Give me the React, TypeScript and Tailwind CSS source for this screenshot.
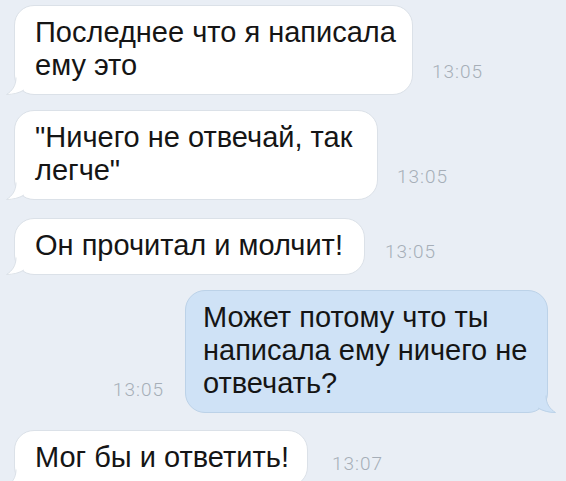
const font = { fontFamily: '"Liberation Sans", Arial, sans-serif' };

type Msg = {
  out?: boolean;
  lines: string[];
  time: string;
  width: string;
  gap: string;
  mt: string;
};

const messages: Msg[] = [
  { lines: ["Последнее что я написала", "ему это"], time: "13:05", width: "w-[399px]", gap: "ml-[19px]", mt: "mt-[5px]" },
  { lines: ["\"Ничего не отвечай, так", "легче\""], time: "13:05", width: "w-[364px]", gap: "ml-[19px]", mt: "mt-[15px]" },
  { lines: ["Он прочитал и молчит!"], time: "13:05", width: "w-[351px]", gap: "ml-[20px]", mt: "mt-[18px]" },
  { out: true, lines: ["Может потому что ты", "написала ему ничего не", "отвечать?"], time: "13:05", width: "w-[363px]", gap: "mr-[21px]", mt: "mt-[15px]" },
  { lines: ["Мог бы и ответить!"], time: "13:07", width: "w-[294px]", gap: "ml-[24px]", mt: "mt-[17px]" },
];

const InTail = () => (
  <svg className="absolute -left-[9px] -bottom-[1px] w-[24px] h-[18px]" viewBox="0 0 24 18">
    <path d="M10 0 C10 9 6 14 0 18 C7 18 13 16 18 13 L24 13 L24 0 Z" fill="#ffffff" />
    <path d="M10 0.5 C10 9 6 14 0.5 17.5 C7 17.5 13 16 18 13" fill="none" stroke="#dbe1e8" strokeWidth="1" />
  </svg>
);

const OutTail = () => (
  <svg className="absolute -right-[9px] -bottom-[1px] w-[24px] h-[18px]" viewBox="0 0 24 18">
    <path d="M14 0 C14 9 18 14 24 18 C17 18 11 16 6 13 L0 13 L0 0 Z" fill="#cfe2f6" />
    <path d="M14 0.5 C14 9 18 14 23.5 17.5 C17 17.5 11 16 6 13" fill="none" stroke="#bcd2e8" strokeWidth="1" />
  </svg>
);

const Time = ({ t, cls }: { t: string; cls: string }) => (
  <span
    className={`${cls} mb-[14px] text-[19px] leading-none font-light tracking-[1px] text-[#a6aeb8] whitespace-nowrap`}
    style={{ fontFamily: 'Roboto, "Liberation Sans", sans-serif' }}
  >
    {t}
  </span>
);

export default function App() {
  return (
    <div className="w-[566px] h-[481px] overflow-hidden bg-[#e9eef5] flex flex-col" style={font}>
      {messages.map((m, i) => (
        <div key={i} className={`${m.mt} flex items-end shrink-0 ${m.out ? "justify-end pr-[18px]" : "pl-[14px]"}`}>
          {m.out && <Time t={m.time} cls={m.gap} />}
          <div
            className={`relative ${m.width} shrink-0 rounded-[20px] border ${
              m.out ? "bg-[#cfe2f6] border-[#bcd2e8] pl-[17px]" : "bg-white border-[#dbe1e8] pl-[20px]"
            } pr-[10px] pt-[10px] pb-[12px] text-[29px] leading-[33px] text-[#151515] whitespace-nowrap`}
          >
            {m.out ? <OutTail /> : <InTail />}
            <div className="relative">
              {m.lines.map((l, j) => (
                <div key={j}>{l}</div>
              ))}
            </div>
          </div>
          {!m.out && <Time t={m.time} cls={m.gap} />}
        </div>
      ))}
    </div>
  );
}
